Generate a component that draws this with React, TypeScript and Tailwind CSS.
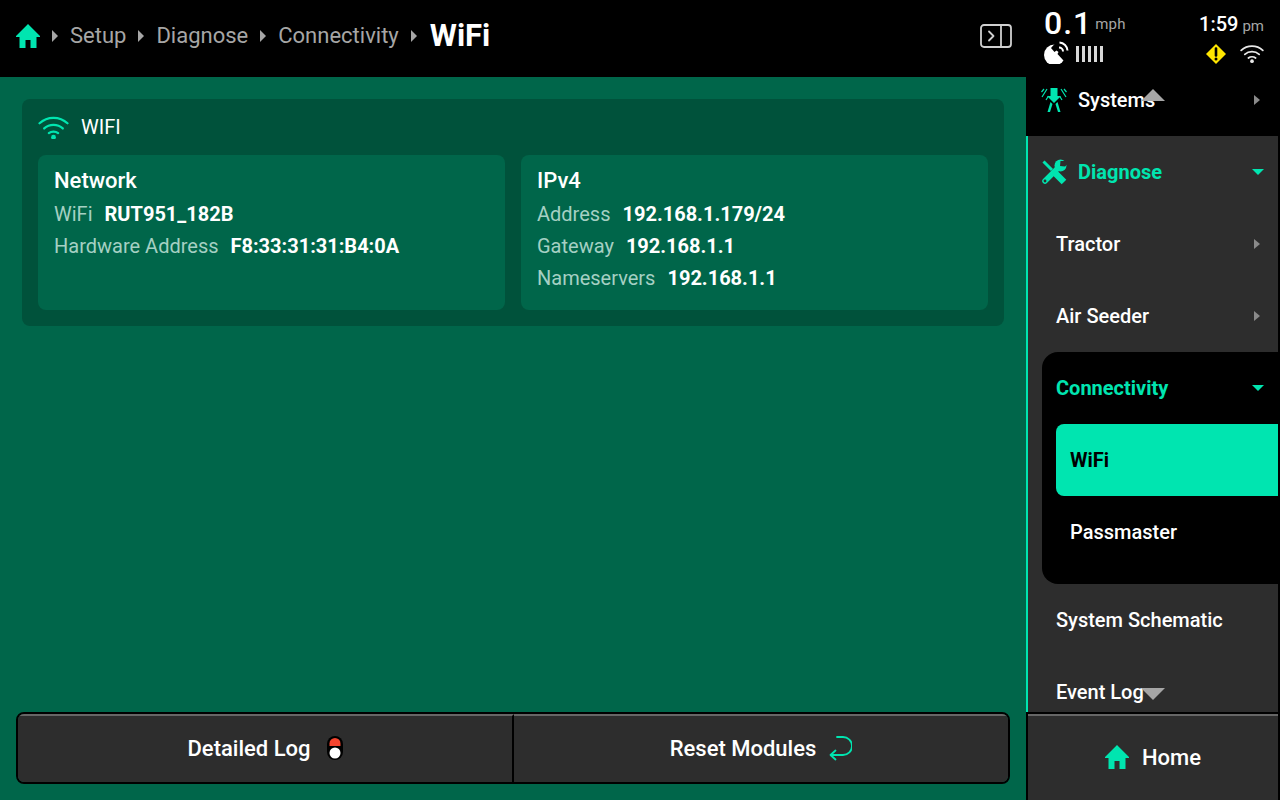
import React from "react";

const Caret = ({ className = "" }: { className?: string }) => (
  <svg width="6" height="10" viewBox="0 0 6 10" className={className}><path d="M0 0 L6 5 L0 10 Z" fill="currentColor" /></svg>
);
const CrumbCaret = ({ className = "" }: { className?: string }) => (
  <svg width="6" height="12" viewBox="0 0 6 12" className={className}><path d="M0 0 L6 6 L0 12 Z" fill="currentColor" /></svg>
);
const CaretDown = () => (
  <svg width="12" height="6" viewBox="0 0 12 6" className="text-[#00e5b0]"><path d="M0 0 H12 L6 6 Z" fill="currentColor" /></svg>
);
const HomeIcon = ({ w, h }: { w: number; h: number }) => (
  <svg width={w} height={h} viewBox="0 0 24 24" fill="#00e5b0"><path d="M12 0 L24 12 V13 H20.5 V24 H14.5 V16 H9.5 V24 H3.5 V13 H0 V12 Z" /></svg>
);
const Wifi = ({ color, size }: { color: string; size: number }) => (
  <svg width={size} height={size * 0.8} viewBox="0 0 30 24" fill="none" stroke={color} strokeWidth="2.2" strokeLinecap="round">
    <path d="M1.5 8 C9 1 21 1 28.5 8" />
    <path d="M6 13 C11 8.5 19 8.5 24 13" />
    <path d="M10.5 17.5 C13 15.5 17 15.5 19.5 17.5" />
    <circle cx="15" cy="21.5" r="2.3" fill={color} stroke="none" />
  </svg>
);

const Row = ({ children }: { children: React.ReactNode }) => (
  <div className="h-[72px] pl-[28px] pr-[18px] flex items-center justify-between text-[20px] font-medium text-white">{children}</div>
);
const Info = ({ label, value }: { label: string; value: string }) => (
  <div className="h-[32px] pt-[2px] flex items-center text-[20px] whitespace-nowrap">
    <span className="text-[#a5d0c3] mr-[12px]">{label}</span>
    <span className="text-white font-bold">{value}</span>
  </div>
);
const Crumb = ({ t }: { t: string }) => (
  <>
    <span className="text-[#a6a6a6] text-[22px] leading-[24px] mx-[12px]">{t}</span>
    <CrumbCaret className="text-[#a6a6a6]" />
  </>
);
const Btn = ({ children, cls }: { children: React.ReactNode; cls: string }) => (
  <div className={`flex-1 h-full bg-[#2d2d2d] border-t-2 border-[#666666] pb-[2px] flex items-center justify-center gap-[16px] text-[22px] font-medium text-white ${cls}`}>{children}</div>
);

export default function App() {
  return (
    <div className="w-[1280px] h-[800px] flex overflow-hidden bg-black font-['Roboto',sans-serif]">
      <div className="w-[1026px] flex flex-col">
        <header className="h-[77px] bg-black flex items-center pl-[16px] pr-[14px] pb-[5px] shrink-0">
          <HomeIcon w={24} h={24} />
          <CrumbCaret className="text-[#a6a6a6] ml-[12px]" />
          <Crumb t="Setup" />
          <Crumb t="Diagnose" />
          <Crumb t="Connectivity" />
          <span className="text-white text-[31px] font-bold ml-[13px] leading-[34px]">WiFi</span>
          <svg width="32" height="24" viewBox="0 0 32 24" fill="none" stroke="#d0d0d0" strokeWidth="1.8" className="ml-auto">
            <rect x="1" y="1" width="30" height="22" rx="3" />
            <path d="M21 1 V23" />
            <path d="M9 7.5 L13.5 12 L9 16.5" strokeLinecap="round" strokeLinejoin="round" />
          </svg>
        </header>
        <main className="flex-1 bg-[#00664a] flex flex-col pt-[22px] pb-[16px] pl-[16px] pr-[16px]">
          <section className="ml-[6px] mr-[6px] bg-[#00523b] rounded-[8px] px-[16px] pb-[16px]">
            <div className="h-[56px] flex items-center text-white text-[20px] font-normal">
              <Wifi color="#00e5b0" size={31} />
              <span className="ml-[12px] -mt-[1px]">WIFI</span>
            </div>
            <div className="flex gap-[16px]">
              <div className="flex-1 h-[155px] bg-[#00664a] rounded-[8px] px-[16px] pt-[9px]">
                <div className="text-white text-[22px] font-medium h-[33px] flex items-center">Network</div>
                <Info label="WiFi" value="RUT951_182B" />
                <Info label="Hardware Address" value="F8:33:31:31:B4:0A" />
              </div>
              <div className="flex-1 h-[155px] bg-[#00664a] rounded-[8px] px-[16px] pt-[9px]">
                <div className="text-white text-[22px] font-medium h-[33px] flex items-center">IPv4</div>
                <Info label="Address" value="192.168.1.179/24" />
                <Info label="Gateway" value="192.168.1.1" />
                <Info label="Nameservers" value="192.168.1.1" />
              </div>
            </div>
          </section>
          <div className="mt-auto h-[72px] flex border-2 border-black rounded-[8px] overflow-hidden">
            <Btn cls="border-r-2 border-r-black">
              <span>Detailed Log</span>
              <svg width="16" height="24" viewBox="0 0 16 24">
                <rect x="0" y="0" width="16" height="24" rx="8" fill="#000" />
                <path d="M2.5 10 V7.5 a5.5 5.5 0 0 1 11 0 V10 Z" fill="#f4442e" />
                <circle cx="8" cy="17" r="5.5" fill="#fff" />
              </svg>
            </Btn>
            <Btn cls="">
              <span>Reset Modules</span>
              <svg width="24" height="26" viewBox="0 0 24 26" fill="none" stroke="#00e5b0" strokeWidth="1.8" strokeLinecap="round" strokeLinejoin="round" className="-ml-[4px]">
                <path d="M9 2 H15 a7.5 7.5 0 0 1 0 18 H3" />
                <path d="M7.5 15.5 L2.5 20 L7.5 24.5" />
              </svg>
            </Btn>
          </div>
        </main>
      </div>

      <aside className="w-[254px] flex flex-col relative">
        <div className="h-[64px] shrink-0 pl-[18px] pr-[16px] pt-[8px] flex justify-between text-white">
          <div>
            <div className="flex items-baseline h-[30px]">
              <span className="text-[32px] font-medium leading-[30px] tracking-[1px]">0.1</span>
              <span className="text-[15px] text-[#a6a6a6] ml-[3px] relative -top-[5px] tracking-[0.2px]">mph</span>
            </div>
            <div className="flex items-center gap-[7px] mt-[3px]">
              <svg width="25" height="25" viewBox="0 0 25 25" fill="#fff" className="shrink-0">
                <circle cx="10.5" cy="14" r="10.5" />
                <path d="M7 7 L11.5 2 L25 2 L25 19 L19 19 L13.5 13 L14.5 11 L12.5 9.5 L10.5 11 Z" fill="#000" />
                <path d="M15 6.5 a4 4 0 0 1 4 4" fill="none" stroke="#fff" strokeWidth="2" />
                <path d="M15.5 1.5 a8.5 8.5 0 0 1 8 8" fill="none" stroke="#fff" strokeWidth="2" />
              </svg>
              <div className="flex gap-[3px]">
                {[0, 1, 2, 3, 4].map((i) => (
                  <div key={i} className="w-[3px] h-[16px] bg-[#d8d8d8]" />
                ))}
              </div>
            </div>
          </div>
          <div className="flex flex-col items-end">
            <div className="h-[32px] flex items-baseline pt-[1px]">
              <span className="text-[20px] font-medium leading-[30px]">1:59</span>
              <span className="text-[15px] text-[#a6a6a6] ml-[4px]">pm</span>
            </div>
            <div className="flex items-center gap-[14px] mt-[4px]">
              <svg width="20" height="20" viewBox="0 0 20 20">
                <path d="M10 0 L20 10 L10 20 L0 10 Z" fill="#ffe600" />
                <path d="M10 4.5 V11.5" stroke="#000" strokeWidth="2.6" strokeLinecap="round" />
                <circle cx="10" cy="15" r="1.5" fill="#000" />
              </svg>
              <Wifi color="#e8e8e8" size={24} />
            </div>
          </div>
        </div>

        <div className="flex-1 overflow-hidden flex flex-col">
          <div className="h-[72px] shrink-0 pl-[15px] pr-[20px] flex items-center justify-between bg-black text-white text-[20px] font-medium">
            <div className="flex items-center gap-[11px]">
              <svg width="26" height="26" viewBox="0 0 26 26" fill="#00e5b0">
                <path d="M9.5 1 H16.5 V9 H20 L13 16 L6 9 H9.5 Z" />
                <path d="M9.5 15 L11.5 17 L9 25 H6.5 Z M16.5 15 L14.5 17 L17 25 H19.5 Z" />
                <path d="M1 10 L6 2 M5 13 L7.5 9 M25 10 L20 2 M21 13 L18.5 9 M0.5 5 L3 2 M25.5 5 L23 2" stroke="#00e5b0" strokeWidth="1.2" fill="none" />
              </svg>
              <span>Systems</span>
            </div>
            <Caret className="text-[#8a8a8a]" />
          </div>
          <div className="flex-1 bg-[#2d2d2d] border-l-2 border-[#00e5b0] mr-[2px]">
            <div className="h-[72px] pl-[13px] pr-[14px] flex items-center justify-between text-[#00e5b0] text-[20px] font-bold">
              <div className="flex items-center gap-[11px]">
                <svg width="26" height="26" viewBox="0 0 26 26" fill="none" stroke="#00e5b0">
                  <path d="M2.5 2.5 L11 11" strokeWidth="3" />
                  <path d="M14 14 L23 23" strokeWidth="6.5" />
                  <path d="M4 22 L18 8" strokeWidth="5.5" strokeLinecap="round" />
                  <circle cx="19.5" cy="6.5" r="6" fill="#00e5b0" stroke="none" />
                  <path d="M27 2 L19.5 2 L19 7 L24 7.5 L27 5 Z" fill="#2d2d2d" stroke="none" />
                  <circle cx="4" cy="22" r="1.4" fill="#2d2d2d" stroke="none" />
                </svg>
                <span>Diagnose</span>
              </div>
              <CaretDown />
            </div>
            <Row><span>Tractor</span><Caret className="text-[#8a8a8a]" /></Row>
            <Row><span>Air Seeder</span><Caret className="text-[#8a8a8a]" /></Row>
            <div className="ml-[14px] bg-black rounded-l-[16px] h-[232px] pl-[14px]">
              <div className="h-[72px] pr-[14px] flex items-center justify-between text-[#00e5b0] text-[20px] font-bold">
                <span>Connectivity</span>
                <CaretDown />
              </div>
              <div className="h-[72px] bg-[#00e5b0] rounded-l-[8px] pl-[14px] flex items-center text-black text-[20px] font-bold">WiFi</div>
              <div className="h-[72px] pl-[14px] flex items-center text-white text-[20px] font-medium">Passmaster</div>
            </div>
            <Row><span>System Schematic</span></Row>
            <Row><span>Event Log</span></Row>
          </div>
        </div>

        <div className="h-[88px] shrink-0 bg-[#2d2d2d] border-t-2 border-black flex flex-col ml-[2px] mr-[2px]">
          <div className="h-[2px] bg-[#666666]" />
          <div className="flex-1 flex items-center justify-center gap-[13px] pb-[2px] text-white text-[22px] font-medium">
            <HomeIcon w={24} h={24} />
            <span>Home</span>
          </div>
        </div>

        <svg width="24" height="12" viewBox="0 0 24 12" className="absolute left-[115px] top-[89px]"><path d="M12 0 L24 12 H0 Z" fill="#a6a6a6" /></svg>
        <svg width="24" height="12" viewBox="0 0 24 12" className="absolute left-[115px] top-[688px]"><path d="M0 0 H24 L12 12 Z" fill="#a6a6a6" /></svg>
      </aside>
    </div>
  );
}
